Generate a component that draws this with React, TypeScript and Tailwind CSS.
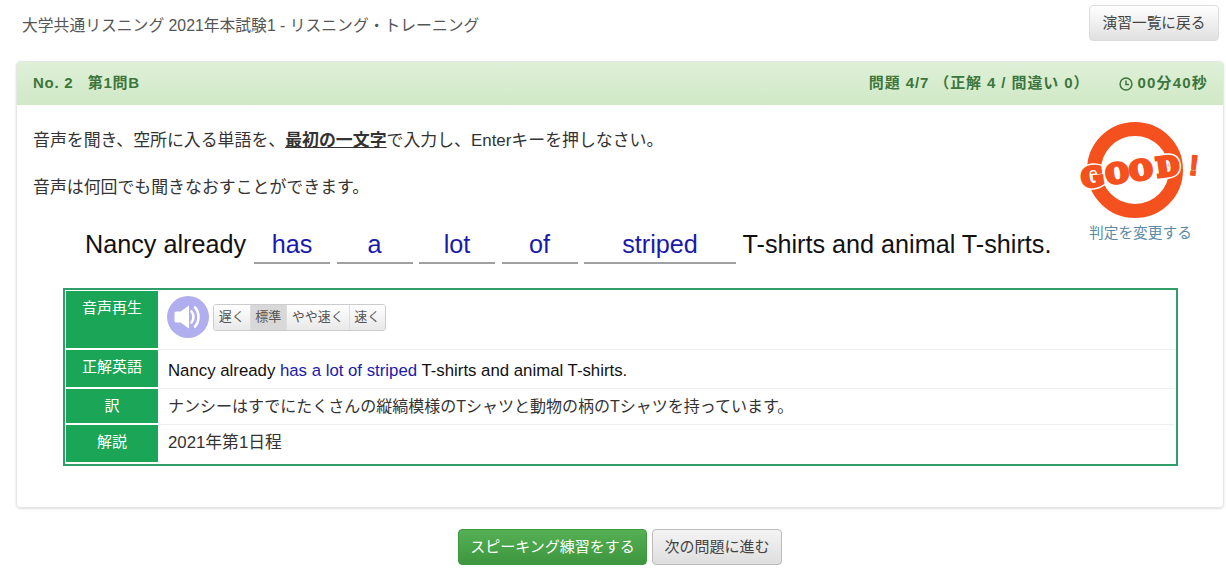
const fontStack = { fontFamily: '"Liberation Sans", "Noto Sans CJK JP", sans-serif' }

const blanks = [
  { word: "has", width: "w-[76px]" },
  { word: "a", width: "w-[76px]" },
  { word: "lot", width: "w-[76px]" },
  { word: "of", width: "w-[76px]" },
  { word: "striped", width: "w-[152px]" },
]

const speeds = [
  { label: "遅く", active: false },
  { label: "標準", active: true },
  { label: "やや速く", active: false },
  { label: "速く", active: false },
]

function GoodLogo() {
  const letters = [
    { ch: "G", x: 14 },
    { ch: "O", x: 39 },
    { ch: "O", x: 63 },
    { ch: "D", x: 90 },
  ]
  const serif = { fontFamily: '"DejaVu Serif", serif' }
  return (
    <svg width="124" height="100" viewBox="0 0 124 100">
      <circle cx="57" cy="49" r="41" fill="none" stroke="#f4511e" strokeWidth="14" />
      <g transform="rotate(-8 50 50.5)">
        {letters.map((l, i) => (
          <text
            key={i}
            x={l.x}
            y="60"
            fontSize="26"
            fontWeight="bold"
            textAnchor="middle"
            fill="#ffffff"
            stroke="#ffffff"
            strokeWidth="6.5"
            style={serif}
          >
            {l.ch}
          </text>
        ))}
        {letters.map((l, i) => (
          <text
            key={i}
            x={l.x}
            y="60"
            fontSize="26"
            fontWeight="bold"
            textAnchor="middle"
            fill="#f4511e"
            stroke="#f4511e"
            strokeWidth="3.6"
            style={serif}
          >
            {l.ch}
          </text>
        ))}
      </g>
      <text
        x="115"
        y="54"
        fontSize="28"
        fontWeight="bold"
        textAnchor="middle"
        fill="#f4511e"
        stroke="#f4511e"
        strokeWidth="1.6"
        transform="rotate(6 115 54)"
        style={{ fontFamily: '"Liberation Sans", sans-serif' }}
      >
        !
      </text>
    </svg>
  )
}

function SpeakerIcon() {
  return (
    <svg width="42" height="42" viewBox="0 0 42 42">
      <circle cx="21" cy="21" r="21" fill="#b1aef0" />
      <path d="M9 15.5h4.5l8.5-6v23l-8.5-6H9a1.5 1.5 0 0 1-1.5-1.5v-8A1.5 1.5 0 0 1 9 15.5z" fill="#ffffff" />
      <path d="M24.5 15.5c2.6 3 2.6 8 0 11" fill="none" stroke="#ffffff" strokeWidth="2.6" strokeLinecap="round" />
      <path d="M28 11.5c4.6 5 4.6 14 0 19" fill="none" stroke="#ffffff" strokeWidth="2.6" strokeLinecap="round" />
    </svg>
  )
}

function Row({ label, height, children, last }: { label: string; height: string; children: React.ReactNode; last?: boolean }) {
  return (
    <div className={`flex ${height} ${last ? "" : "mb-[2px]"}`}>
      <div className="w-[92px] shrink-0 bg-[#1ba556] text-white text-[15px] text-center pt-[7px] leading-[20px]">{label}</div>
      <div className="flex-1 pl-[10px] text-[#333]">{children}</div>
    </div>
  )
}

export default function App() {
  return (
    <div className="w-[1226px] h-[573px] overflow-hidden bg-white" style={fontStack}>
      <div className="flex items-start justify-between h-[61px] pl-[22px] pr-[7px] pt-[5px]">
        <h1 className="text-[15.8px] leading-[20px] text-[#555] font-normal mt-[11px]">
          大学共通リスニング 2021年本試験1 - リスニング・トレーニング
        </h1>
        <button className="w-[130px] h-[36px] rounded-[4px] border border-[#ddd] bg-gradient-to-b from-white to-[#e0e0e0] text-[14.7px] text-[#444]">
          演習一覧に戻る
        </button>
      </div>

      <div className="ml-[16px] w-[1208px] h-[447px] rounded-[4px] border border-[#e6e6e6] shadow-sm overflow-hidden">
        <div className="flex items-center justify-between h-[43px] pl-[16px] pr-[15px] bg-gradient-to-b from-[#dff0d8] to-[#d0e9c6] text-[15px] tracking-[0.9px] font-bold text-[#3c763d]">
          <span className="tracking-[0.7px]">No. 2&nbsp;&nbsp; 第1問B</span>
          <div className="flex items-center">
            <span>問題 4/7 （正解 4 / 間違い 0）</span>
            <span className="flex items-center gap-[4px] ml-[30px] tracking-[1.2px]">
              <svg width="14" height="14" viewBox="0 0 14 14" fill="none" stroke="#3c763d" strokeWidth="1.5">
                <circle cx="7" cy="7" r="5.9" />
                <path d="M7 3.4V7.6H10" />
              </svg>
              00分40秒
            </span>
          </div>
        </div>

        <div className="flex">
          <div className="w-[1052px] pl-[16px]">
            <p className="text-[16.9px] leading-[22px] text-[#333] mt-[25px]">
              音声を聞き、空所に入る単語を、<b className="underline">最初の一文字</b>で入力し、Enterキーを押しなさい。
            </p>
            <p className="text-[16.9px] leading-[22px] text-[#333] mt-[25px]">音声は何回でも聞きなおすことができます。</p>
            <div className="flex items-end text-[25.2px] text-[#111] mt-[21px] ml-[52px] h-[44px] whitespace-nowrap">
              <span className="leading-[36px] pb-[2px] mr-[8px]">Nancy already</span>
              {blanks.map((b) => (
                <span
                  key={b.word}
                  className={`${b.width} mr-[6.5px] h-[38px] leading-[36px] text-center text-[#1a1aaa] border-b-2 border-[#a0a0a0]`}
                >
                  {b.word}
                </span>
              ))}
              <span className="leading-[36px] pb-[2px]">T-shirts and animal T-shirts.</span>
            </div>
          </div>
          <div className="flex-1 pl-[9px] pt-[16px]">
            <GoodLogo />
            <a className="block ml-[11px] mt-[2px] text-[14.7px] leading-[20px] text-[#5a8aa5] whitespace-nowrap">判定を変更する</a>
          </div>
        </div>

        <div className="mx-[46px] mt-[24px] w-[1115px] h-[178px] border-2 border-[#2f9e68] p-[1px]">
          <Row label="音声再生" height="h-[57px]">
            <div className="flex items-center h-full gap-[4px] pb-[5px] -ml-[1px]">
              <SpeakerIcon />
              <div className="flex h-[27px] rounded-[3px] border border-[#ccc] text-[13px] text-[#555] overflow-hidden">
                {speeds.map((s) => (
                  <span
                    key={s.label}
                    className={`flex items-center px-[4.75px] border-r border-[#ddd] last:border-r-0 ${
                      s.active ? "bg-[#d8d8d8]" : "bg-gradient-to-b from-white to-[#e8e8e8]"
                    }`}
                  >
                    {s.label}
                  </span>
                ))}
              </div>
            </div>
          </Row>
          <Row label="正解英語" height="h-[37px]">
            <div className="flex items-center h-[calc(100%+1px)] -mt-[1px] pt-[5px] border-t border-[#eee] -ml-[10px] pl-[10px] text-[16.8px] text-[#111]">
              <span>
                Nancy already <span className="text-[#1a1aaa]">has a lot of striped</span> T-shirts and animal T-shirts.
              </span>
            </div>
          </Row>
          <Row label="訳" height="h-[34px]">
            <div className="flex items-center h-[calc(100%+1px)] -mt-[1px] pt-[2px] border-t border-[#eee] -ml-[10px] pl-[10px] text-[16px]">
              ナンシーはすでにたくさんの縦縞模様のTシャツと動物の柄のTシャツを持っています。
            </div>
          </Row>
          <Row label="解説" height="h-[37px]" last>
            <div className="flex items-center h-[calc(100%+1px)] -mt-[1px] pb-[1px] border-t border-[#eee] -ml-[10px] pl-[10px] text-[16.8px]">
              2021年第1日程
            </div>
          </Row>
        </div>
      </div>

      <div className="flex justify-center gap-[5px] mt-[21px] pl-[14px]">
        <button className="w-[189px] h-[36px] rounded-[4px] border border-[#3f9a3f] bg-gradient-to-b from-[#55b055] to-[#3d963d] text-[15px] text-white">
          スピーキング練習をする
        </button>
        <button className="w-[130px] h-[36px] rounded-[4px] border border-[#bbb] bg-gradient-to-b from-[#f4f4f4] to-[#dedede] text-[15px] text-[#444]">
          次の問題に進む
        </button>
      </div>
    </div>
  )
}
